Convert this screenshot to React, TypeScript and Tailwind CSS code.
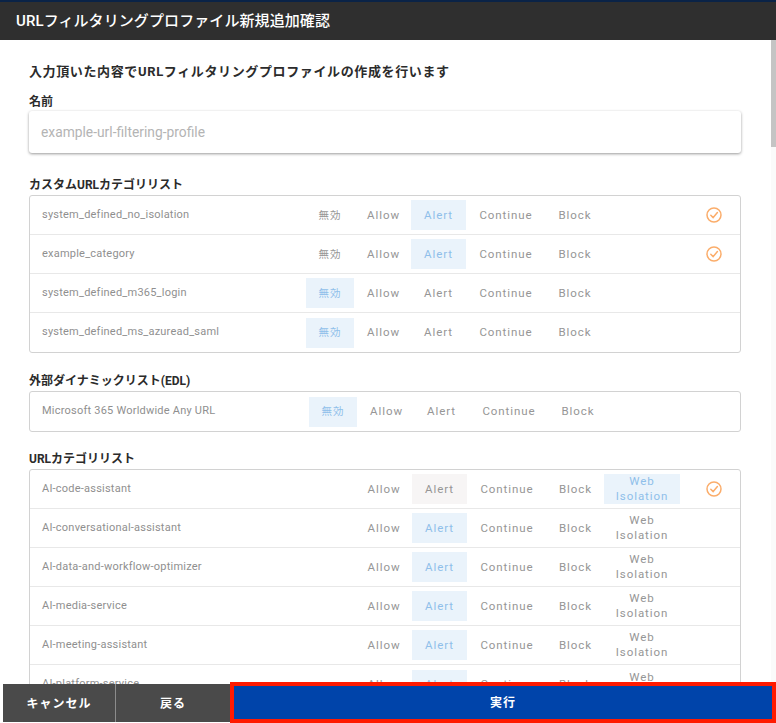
const jp = 'font-["Roboto","Noto_Sans_CJK_JP",sans-serif]';

type Opt = 'off' | 'Allow' | 'Alert' | 'Continue' | 'Block' | 'Web';

type RowData = {
  name: string;
  selected?: Opt;
  muted?: Opt;
  checked?: boolean;
};

const customRows: RowData[] = [
  { name: 'system_defined_no_isolation', selected: 'Alert', checked: true },
  { name: 'example_category', selected: 'Alert', checked: true },
  { name: 'system_defined_m365_login', selected: 'off' },
  { name: 'system_defined_ms_azuread_saml', selected: 'off' },
];

const urlRows: RowData[] = [
  { name: 'AI-code-assistant', selected: 'Web', muted: 'Alert', checked: true },
  { name: 'AI-conversational-assistant', selected: 'Alert' },
  { name: 'AI-data-and-workflow-optimizer', selected: 'Alert' },
  { name: 'AI-media-service', selected: 'Alert' },
  { name: 'AI-meeting-assistant', selected: 'Alert' },
  { name: 'AI-platform-service', selected: 'Alert' },
];

function Option({ id, width, row, children }: { id: Opt; width: string; row: RowData; children: React.ReactNode }) {
  let tone = 'text-[#969696]';
  if (row.selected === id) tone = 'bg-[#eaf3fb] text-[#8fbfea]';
  else if (row.muted === id) tone = 'bg-[#f7f5f5] text-[#969696]';
  return (
    <div className={`flex h-[30px] items-center justify-center text-center text-[11.5px] leading-[15px] tracking-[0.08em] ${width} ${tone}`}>
      {children}
    </div>
  );
}

function CheckIcon() {
  return (
    <svg width="16" height="16" viewBox="0 0 16 16" fill="none" stroke="#fbad6b" strokeWidth="1.5">
      <circle cx="8" cy="8" r="7" />
      <path d="M4.8 8.2 7.2 10.6 11.4 5.6" strokeLinecap="round" strokeLinejoin="round" />
    </svg>
  );
}

function Row({ row, off, web, shift }: { row: RowData; off?: boolean; web?: boolean; shift?: boolean }) {
  return (
    <div className="flex h-[39px] items-center border-b border-[#e8e8e8] last:border-b-0">
      <div className="flex-1 pl-3 text-[11px] tracking-[0.02em] text-[#8f8f8f]">{row.name}</div>
      {off && <Option id="off" width="w-[48px]" row={row}><span className="text-[10.5px]">無効</span></Option>}
      <Option id="Allow" width={web ? 'w-[58px] pl-[2px]' : 'w-[57px] pl-[2px]'} row={row}>Allow</Option>
      <Option id="Alert" width="w-[55px]" row={row}>Alert</Option>
      <Option id="Continue" width="w-[80px]" row={row}>Continue</Option>
      <Option id="Block" width={web ? 'w-[57px]' : 'w-[58px]'} row={row}>Block</Option>
      {web ? (
        <Option id="Web" width="w-[76px]" row={row}>Web<br />Isolation</Option>
      ) : (
        <div className={shift ? 'w-[73px]' : 'w-[76px]'} />
      )}
      <div className="flex w-[60px] justify-center pl-[7px]">{row.checked && <CheckIcon />}</div>
    </div>
  );
}

function Section({ title, children }: { title: string; children: React.ReactNode }) {
  return (
    <section>
      <h2 className="h-[19px] text-[12px] leading-[19px] font-bold text-[#2b2b2b]">{title}</h2>
      <div className="rounded-[3px] border border-[#d2d2d2]">{children}</div>
    </section>
  );
}

export default function App() {
  return (
    <div className={`relative flex h-screen flex-col overflow-hidden bg-white ${jp}`}>
      <div className="h-[2px] bg-[#0a2347]" />
      <header className="flex h-[38px] items-center bg-[#2f2f2f] pt-px pl-4 text-[15px] font-medium tracking-[0.006em] text-white">
        URLフィルタリングプロファイル新規追加確認
      </header>

      <main className="flex flex-1 flex-col overflow-hidden pt-[23px] pr-[35px] pl-[29px]">
        <p className="h-[18px] text-[13px] leading-[18px] font-bold tracking-[0.048em] text-[#2b2b2b]">
          入力頂いた内容でURLフィルタリングプロファイルの作成を行います
        </p>
        <label className="mt-[12px] h-[18px] text-[12px] leading-[19px] font-bold text-[#2b2b2b]">名前</label>
        <div className="flex h-[42px] shrink-0 items-center rounded-[3px] bg-white pl-3 text-[13.8px] text-[#b4b4b4] shadow-[0_1px_3px_rgba(0,0,0,0.4)]">
          example-url-filtering-profile
        </div>

        <div className="mt-[23px] flex flex-col">
          <Section title="カスタムURLカテゴリリスト">
            {customRows.map((row) => (
              <Row key={row.name} row={row} off />
            ))}
          </Section>
          <div className="mt-[19px]">
            <Section title="外部ダイナミックリスト(EDL)">
              <Row row={{ name: 'Microsoft 365 Worldwide Any URL', selected: 'off' }} off shift />
            </Section>
          </div>
          <div className="mt-[18px]">
            <Section title="URLカテゴリリスト">
              {urlRows.map((row) => (
                <Row key={row.name} row={row} web />
              ))}
            </Section>
          </div>
        </div>
      </main>

      {/* scrollbar */}
      <div className="absolute top-[40px] right-0 bottom-0 w-[5px] bg-[#fafafa]">
        <div className="h-[107px] bg-[#c4c4c4]" />
      </div>

      <div className="absolute right-0 bottom-0 left-0 flex h-[41px] items-end pl-[3px] text-[12px] font-bold tracking-[0.08em] text-white">
        <button className="mb-px h-[38px] w-[113px] border-r border-[#8c8c8c] bg-[#4a4a4a] pt-px">キャンセル</button>
        <button className="mb-px h-[38px] w-[114px] bg-[#4a4a4a] pt-px">戻る</button>
        <button className="h-[41px] flex-1 border-4 border-[#ff1a00] bg-[#0044aa]">実行</button>
      </div>
    </div>
  );
}
